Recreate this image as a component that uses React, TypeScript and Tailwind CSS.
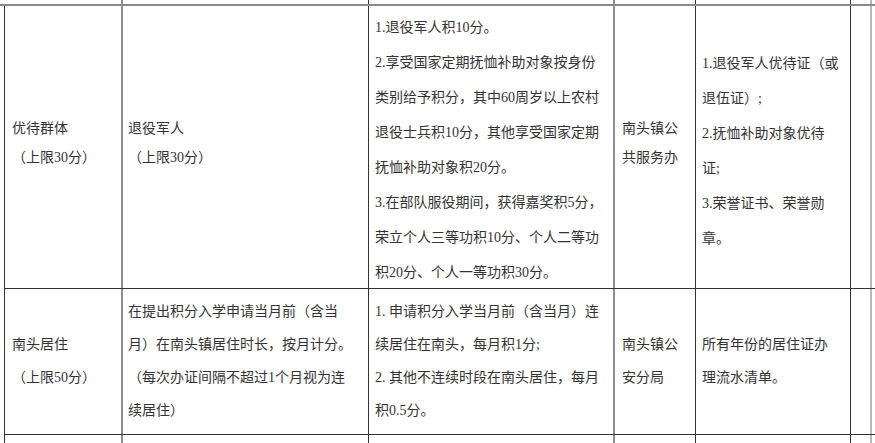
import React from "react";

// 列定义：宽度、右边框、左内边距
const cols = [
  { w: "w-[118px]", border: "border-r-2 border-[#8e8e8e]", pl: "pl-[7px]" },
  { w: "w-[246px]", border: "border-r border-[#333]", pl: "pl-[5px]" },
  { w: "w-[246px]", border: "border-r-2 border-[#8e8e8e]", pl: "pl-[6px]" },
  { w: "w-[81px]", border: "border-r border-[#333]", pl: "pl-[7px]" },
  { w: "w-[155px]", border: "border-r border-[#333]", pl: "pl-[6px]" },
  { w: "w-[21px]", border: "border-r-2 border-[#b8b8b8]", pl: "" },
];

type Cell = { lines: string[]; cls: string };

const row1: Cell[] = [
  { lines: ["优待群体", "（上限30分）"], cls: "leading-[29px] pt-[108px]" },
  { lines: ["退役军人", "（上限30分）"], cls: "leading-[29px] pt-[108px]" },
  {
    lines: [
      "1.退役军人积10分。",
      "2.享受国家定期抚恤补助对象按身份",
      "类别给予积分，其中60周岁以上农村",
      "退役士兵积10分，其他享受国家定期",
      "抚恤补助对象积20分。",
      "3.在部队服役期间，获得嘉奖积5分，",
      "荣立个人三等功积10分、个人二等功",
      "积20分、个人一等功积30分。",
    ],
    cls: "leading-[35px] pt-[4px]",
  },
  { lines: ["南头镇公", "共服务办"], cls: "leading-[29px] pt-[108px]" },
  {
    lines: [
      "1.退役军人优待证（或",
      "退伍证）;",
      "2.抚恤补助对象优待",
      "证;",
      "3.荣誉证书、荣誉勋",
      "章。",
    ],
    cls: "leading-[35px] pt-[40px]",
  },
  { lines: [], cls: "" },
];

const row2: Cell[] = [
  { lines: ["南头居住", "（上限50分）"], cls: "leading-[33px] pt-[39px]" },
  {
    lines: [
      "在提出积分入学申请当月前（含当",
      "月）在南头镇居住时长，按月计分。",
      "（每次办证间隔不超过1个月视为连",
      "续居住）",
    ],
    cls: "leading-[33px] pt-[6px]",
  },
  {
    lines: [
      "1. 申请积分入学当月前（含当月）连",
      "续居住在南头，每月积1分;",
      "2. 其他不连续时段在南头居住，每月",
      "积0.5分。",
    ],
    cls: "leading-[33px] pt-[6px]",
  },
  { lines: ["南头镇公", "安分局"], cls: "leading-[33px] pt-[39px]" },
  { lines: ["所有年份的居住证办", "理流水清单。"], cls: "leading-[33px] pt-[39px]" },
  { lines: [], cls: "" },
];

function EmptyRow({ h, left }: { h: string; left: string }) {
  return (
    <div className={`ml-[4px] flex border-l ${left} ${h}`}>
      {cols.map((c, i) => (
        <div key={i} className={`${c.w} ${c.border} h-full shrink-0`} />
      ))}
    </div>
  );
}

function Row({ cells, h }: { cells: Cell[]; h: string }) {
  return (
    <div className={`ml-[4px] flex border-l border-b border-[#333] ${h}`}>
      {cells.map((cell, i) => (
        <div
          key={i}
          className={`${cols[i].w} ${cols[i].border} ${cols[i].pl} ${cell.cls} h-full shrink-0 whitespace-nowrap`}
        >
          {cell.lines.map((l, j) => (
            <div key={j}>{l}</div>
          ))}
        </div>
      ))}
    </div>
  );
}

export default function App() {
  return (
    <div className="w-[875px] h-[443px] overflow-hidden bg-white text-[14px] text-[#333] font-['Liberation_Serif','Noto_Sans_CJK_SC',serif]">
      {/* 上一行的残留部分 */}
      <EmptyRow h="h-[4px]" left="border-transparent" />
      <div className="h-[2px] w-full bg-[#8a8a8a]" />
      {/* 优待群体 */}
      <Row cells={row1} h="h-[283px]" />
      {/* 南头居住 */}
      <Row cells={row2} h="h-[146px]" />
      {/* 下一行开头 */}
      <EmptyRow h="h-[10px]" left="border-[#333]" />
    </div>
  );
}
